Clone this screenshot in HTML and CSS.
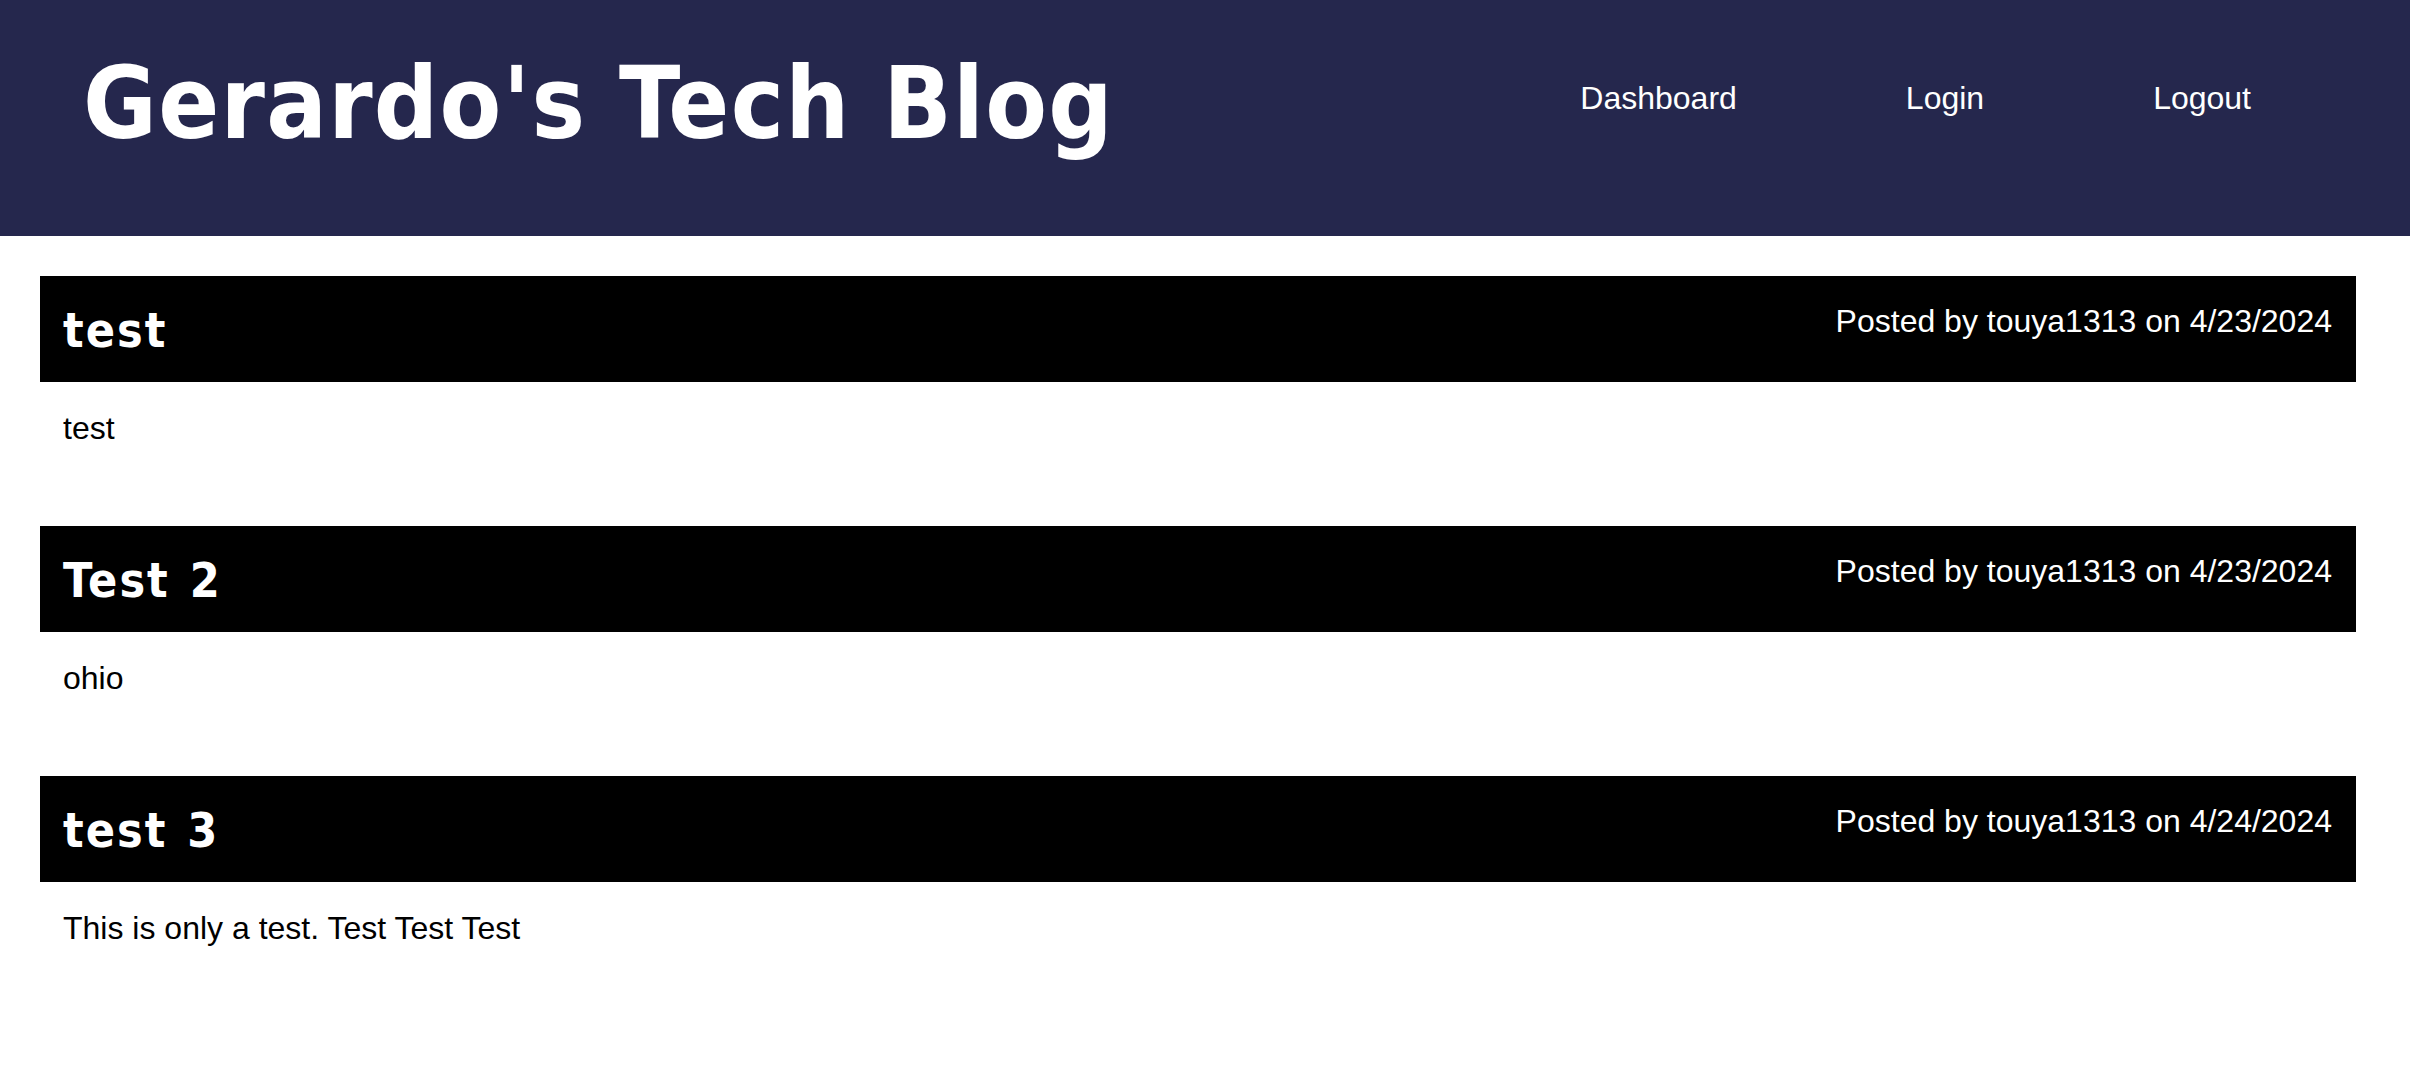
FILE: index.html
```html
<!DOCTYPE html>
<html lang="en">
<head>
<meta charset="utf-8">
<title>Gerardo's Tech Blog</title>
<link rel="stylesheet" href="styles.css">
</head>
<body>
<header class="site-header">
  <h1 class="site-title">Gerardo's Tech Blog</h1>
  <nav class="site-nav">
    <a href="#" class="nav-link">Dashboard</a>
    <a href="#" class="nav-link">Login</a>
    <a href="#" class="nav-link">Logout</a>
  </nav>
</header>
<main class="posts">
  <article class="post">
    <div class="post-head">
      <h2 class="post-title">test</h2>
      <p class="post-meta">Posted by touya1313 on 4/23/2024</p>
    </div>
    <p class="post-body">test</p>
  </article>
  <article class="post">
    <div class="post-head">
      <h2 class="post-title">Test 2</h2>
      <p class="post-meta">Posted by touya1313 on 4/23/2024</p>
    </div>
    <p class="post-body">ohio</p>
  </article>
  <article class="post">
    <div class="post-head">
      <h2 class="post-title">test 3</h2>
      <p class="post-meta">Posted by touya1313 on 4/24/2024</p>
    </div>
    <p class="post-body">This is only a test. Test Test Test</p>
  </article>
</main>
</body>
</html>
```
FILE: styles.css
```css
* { box-sizing: border-box; }

html, body {
  margin: 0;
  padding: 0;
  background: #ffffff;
  font-family: "Liberation Sans", Arial, Helvetica, sans-serif;
  color: #000000;
}

.site-header {
  display: flex;
  justify-content: space-between;
  align-items: flex-start;
  height: 236px;
  padding: 0 159px 0 83px;
  background: #25274d;
}

.site-title {
  margin: 46px 0 0 0;
  font-family: "DejaVu Sans Condensed", "DejaVu Sans", sans-serif;
  font-stretch: condensed;
  font-weight: 700;
  font-size: 100px;
  line-height: 116px;
  letter-spacing: 1.3px;
  color: #ffffff;
}

.site-nav {
  display: flex;
  gap: 169px;
  margin-top: 80px;
}

.nav-link {
  font-size: 32px;
  line-height: 37px;
  color: #ffffff;
  text-decoration: none;
}

.posts {
  padding: 40px 54px 0 40px;
}

.post {
  margin-bottom: 80px;
}

.post-head {
  display: flex;
  justify-content: space-between;
  align-items: flex-start;
  height: 106px;
  padding: 26px 24px 0 23px;
  background: #000000;
  color: #ffffff;
}

.post-title {
  margin: 0;
  font-family: "DejaVu Sans Condensed", "DejaVu Sans", sans-serif;
  font-stretch: condensed;
  font-weight: 700;
  font-size: 48px;
  line-height: 56px;
  letter-spacing: 2px;
  word-spacing: 3px;
}

.post-meta {
  margin: 1px 0 0 0;
  font-size: 32px;
  line-height: 37px;
}

.post-body {
  margin: 28px 0 0 0;
  padding-left: 23px;
  font-size: 32px;
  line-height: 36px;
}
```
